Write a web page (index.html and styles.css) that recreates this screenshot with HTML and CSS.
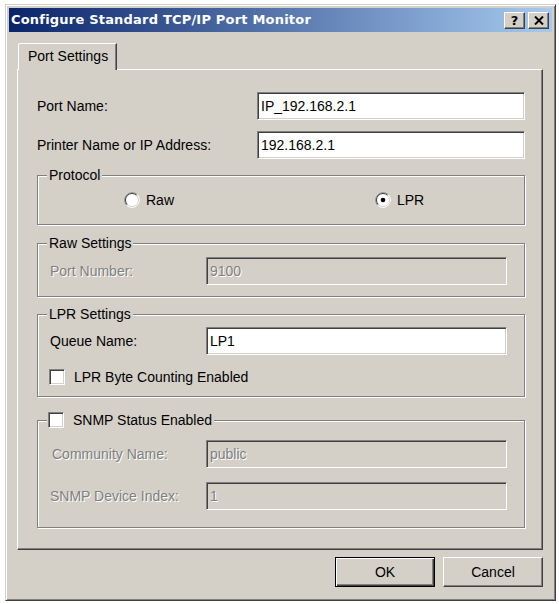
FILE: index.html
```html
<!DOCTYPE html>
<html lang="en">
<head>
<meta charset="utf-8">
<title>Configure Standard TCP/IP Port Monitor</title>
<link rel="stylesheet" href="styles.css">
</head>
<body>
<div class="window">
  <div class="titlebar">
    <span class="title">Configure Standard TCP/IP Port Monitor</span>
    <div class="caption-btns">
      <span class="cbtn help">?</span>
      <span class="cbtn close"><svg width="10" height="9" viewBox="0 0 10 9"><path d="M1 0.5 L9 8.5 M9 0.5 L1 8.5" stroke="#000" stroke-width="2" fill="none"/></svg></span>
    </div>
  </div>
  <div class="client">
    <div class="tabs"><div class="tab">Port Settings</div></div>
    <div class="panel">
      <div class="row"><span class="lbl">Port Name:</span><div class="edit">IP_192.168.2.1</div></div>
      <div class="row"><span class="lbl">Printer Name or IP Address:</span><div class="edit">192.168.2.1</div></div>

      <fieldset class="group protocol">
        <legend>Protocol</legend>
        <div class="radios">
          <span class="radio"><svg width="16" height="16" viewBox="0 0 16 16"><circle cx="8" cy="8" r="7.5" fill="#fff"/><path d="M2.7 13.3 A7.5 7.5 0 0 1 13.3 2.7" stroke="#808080" fill="none"/><path d="M3.4 12.6 A6.5 6.5 0 0 1 12.6 3.4" stroke="#404040" fill="none"/><path d="M13.3 2.7 A7.5 7.5 0 0 1 2.7 13.3" stroke="#fff" fill="none"/><path d="M12.6 3.4 A6.5 6.5 0 0 1 3.4 12.6" stroke="#d4d0c8" fill="none"/></svg>Raw</span>
          <span class="radio"><svg width="16" height="16" viewBox="0 0 16 16"><circle cx="8" cy="8" r="7.5" fill="#fff"/><path d="M2.7 13.3 A7.5 7.5 0 0 1 13.3 2.7" stroke="#808080" fill="none"/><path d="M3.4 12.6 A6.5 6.5 0 0 1 12.6 3.4" stroke="#404040" fill="none"/><path d="M13.3 2.7 A7.5 7.5 0 0 1 2.7 13.3" stroke="#fff" fill="none"/><path d="M12.6 3.4 A6.5 6.5 0 0 1 3.4 12.6" stroke="#d4d0c8" fill="none"/><circle cx="8" cy="8" r="2.3" fill="#000"/></svg>LPR</span>
        </div>
      </fieldset>

      <fieldset class="group raw">
        <legend>Raw Settings</legend>
        <div class="grow"><span class="lbl disabled">Port Number:</span><div class="edit off">9100</div></div>
      </fieldset>

      <fieldset class="group lpr">
        <legend>LPR Settings</legend>
        <div class="grow"><span class="lbl">Queue Name:</span><div class="edit">LP1</div></div>
        <div class="check"><span class="box"></span>LPR Byte Counting Enabled</div>
      </fieldset>

      <fieldset class="group snmp">
        <legend><span class="check"><span class="box"></span>SNMP Status Enabled</span></legend>
        <div class="grow"><span class="lbl disabled indent">Community Name:</span><div class="edit off">public</div></div>
        <div class="grow second"><span class="lbl disabled">SNMP Device Index:</span><div class="edit off">1</div></div>
      </fieldset>
    </div>
    <div class="buttons">
      <button class="btn default">OK</button>
      <button class="btn">Cancel</button>
    </div>
  </div>
</div>
</body>
</html>
```
FILE: styles.css
```css
* { box-sizing: border-box; }

body {
  margin: 0;
  background: #ffffff;
  font-family: "Liberation Sans", Arial, sans-serif;
  font-size: 14px;
  line-height: 16px;
  color: #000;
}

.window {
  margin: 4px 0 0 5px;
  width: 551px;
  background: #d4d0c8;
  border: 1px solid;
  border-color: #d4d0c8 #404040 #404040 #d4d0c8;
  box-shadow: inset 1px 1px #fff, inset -1px -1px #808080;
  padding: 3px;
}

.titlebar {
  height: 24px;
  display: flex;
  align-items: center;
  background: linear-gradient(to right, #0a246a, #a6caf0);
  padding: 0 3px 0 2px;
}

.title {
  flex: 1;
  color: #fff;
  font-family: "DejaVu Sans", Verdana, sans-serif;
  font-weight: bold;
  font-size: 13px;
  letter-spacing: 0.2px;
  white-space: nowrap;
}

.caption-btns {
  display: flex;
  gap: 3px;
}

.cbtn {
  width: 21px;
  height: 17px;
  background: #d4d0c8;
  border: 1px solid;
  border-color: #fff #404040 #404040 #fff;
  box-shadow: inset -1px -1px #808080;
  display: flex;
  align-items: center;
  justify-content: center;
  font-family: "DejaVu Sans", sans-serif;
  font-weight: bold;
  font-size: 13px;
  line-height: 13px;
}

.client {
  padding: 11px 9px 10px 8px;
}

.tabs {
  display: flex;
  padding-left: 1px;
}

.tab {
  position: relative;
  z-index: 1;
  margin-bottom: -1px;
  width: 99px;
  height: 27px;
  background: #d4d0c8;
  border-style: solid;
  border-width: 1px 1px 0 1px;
  border-color: #fff #404040 transparent #fff;
  border-top-left-radius: 2px;
  box-shadow: inset -1px 0 #808080;
  padding: 4px 0 0 9px;
  white-space: nowrap;
}

.panel {
  border: 1px solid;
  border-color: #fff #404040 #404040 #fff;
  box-shadow: inset -1px -1px #808080;
  padding: 22px 17px 21px 19px;
}

.row {
  display: grid;
  grid-template-columns: 220px 1fr;
  align-items: center;
}
.row + .row { margin-top: 11px; }

.lbl { white-space: nowrap; }
.indent { padding-left: 2px; }

.edit {
  height: 28px;
  background: #fff;
  border: 1px solid;
  border-color: #808080 #fff #fff #808080;
  box-shadow: inset 1px 1px #404040, inset -1px -1px #d4d0c8;
  padding: 0 4px 0 3px;
  display: flex;
  align-items: center;
}

.edit.off {
  background: #d4d0c8;
  color: #808080;
  text-shadow: 1px 1px 0 #fff;
}

.disabled {
  color: #808080;
  text-shadow: 1px 1px 0 #fff;
}

.group {
  margin: 0;
  min-width: 0;
  border: 1px solid #808080;
  box-shadow: inset 1px 1px #fff, 1px 1px #fff;
  padding: 6px 17px 11px 12px;
}

.group legend {
  padding: 0 2px;
  margin-left: -3px;
  line-height: 16px;
  background: #d4d0c8;
}

.protocol { margin-top: 8px; padding-top: 9px; padding-bottom: 16px; }
.raw { margin-top: 10px; padding-top: 6px; padding-bottom: 11px; }
.lpr { margin-top: 9px; padding-top: 5px; padding-bottom: 11px; }
.snmp { margin-top: 15px; padding-top: 12px; padding-bottom: 17px; }

.radios {
  display: grid;
  grid-template-columns: 251px 1fr;
  padding-left: 74px;
}

.radio {
  display: flex;
  align-items: center;
  gap: 6px;
}
.radio svg { display: block; }

.grow {
  display: grid;
  grid-template-columns: 156px 1fr;
  align-items: center;
}
.grow.second { margin-top: 14px; }

.check {
  display: flex;
  align-items: center;
  gap: 9px;
  margin-left: -1px;
}
.lpr .check { margin-top: 14px; }

.box {
  width: 16px;
  height: 16px;
  background: #fff;
  border: 1px solid;
  border-color: #808080 #fff #fff #808080;
  box-shadow: inset 1px 1px #404040, inset -1px -1px #d4d0c8;
}

.buttons {
  display: flex;
  justify-content: flex-end;
  gap: 8px;
  margin-top: 7px;
}

.btn {
  width: 100px;
  height: 30px;
  padding: 0;
  font-family: "Liberation Sans", Arial, sans-serif;
  font-size: 14px;
  color: #000;
  background: #d4d0c8;
  border: 1px solid;
  border-color: #fff #404040 #404040 #fff;
  box-shadow: inset -1px -1px #808080;
}

.btn.default {
  border-color: #000;
  box-shadow: inset 1px 1px #fff, inset -1px -1px #404040, inset -2px -2px #808080;
}
```
